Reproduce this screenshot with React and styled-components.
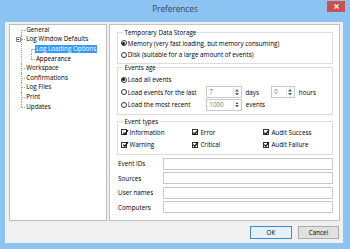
import React from "react";
import styled, { createGlobalStyle } from "styled-components";

const GlobalStyle = createGlobalStyle`
  html, body {
    margin: 0;
    padding: 0;
  }
  body {
    width: 350px;
    height: 249px;
    overflow: hidden;
    font-family: "Open Sans", "Noto Sans", sans-serif;
    color: #000;
  }
  * {
    box-sizing: border-box;
  }
`;

const Window = styled.div`
  width: 350px;
  height: 249px;
  background: #8cc3f2;
  display: flex;
  flex-direction: column;
`;

const TitleBar = styled.div`
  height: 22px;
  flex: none;
  display: grid;
  grid-template-columns: 1fr auto 1fr;
  align-items: start;
  padding: 0 5px;
`;

const Title = styled.div`
  grid-column: 2;
  font-size: 8.2px;
  line-height: 18px;
  color: #34465a;
`;

const CloseButton = styled.div`
  grid-column: 3;
  justify-self: end;
  width: 18px;
  height: 11px;
  margin-top: 1px;
  background: #c9514f;
  display: flex;
  align-items: center;
  justify-content: center;
`;

const Content = styled.div`
  flex: 1;
  margin: 0 7px 6px 5px;
  background: #f0f0f0;
  padding: 2px 3px 3.7px 4px;
  display: flex;
  flex-direction: column;
`;

const Main = styled.div`
  height: 197px;
  display: flex;
  gap: 2px;
`;

const TreePanel = styled.div`
  width: 98px;
  background: #fff;
  border: 1px solid #bdbdbd;
`;

const TreeList = styled.ul`
  list-style: none;
  margin: 0;
  padding: 0 0 0 ${(p) => p.$indent}px;
  font-size: 6.3px;
`;

const Item = styled.li`
  position: relative;
  padding-left: 4px;

  &::before {
    content: "";
    position: absolute;
    left: 0;
    top: ${(p) => (p.$first ? "4.8px" : "0")};
    height: ${(p) => (p.$last ? "4.8px" : "auto")};
    bottom: ${(p) => (p.$last ? "auto" : "0")};
    border-left: 1px dotted #a3a3a3;
  }

  &::after {
    content: "";
    position: absolute;
    left: 0;
    top: 4.8px;
    width: 4px;
    border-top: 1px dotted #a3a3a3;
  }
`;

const Row = styled.div`
  height: 9.6px;
  display: flex;
  align-items: center;
`;

const Label = styled.span`
  line-height: 8px;
  padding: 0 1.2px;
  white-space: nowrap;
  background: ${(p) => (p.$selected ? "#3399ff" : "transparent")};
  color: ${(p) => (p.$selected ? "#fff" : "#000")};
`;

const Expander = styled.span`
  position: absolute;
  left: -5.3px;
  top: 2.3px;
  width: 5px;
  height: 5px;
  border: 1px solid #8e8e8e;
  background: #fff;
  z-index: 1;

  &::after {
    content: "";
    position: absolute;
    left: 0.5px;
    right: 0.5px;
    top: 1.5px;
    border-top: 1px solid #444;
  }
`;

const RightPanel = styled.div`
  flex: 1;
  background: #fff;
  border: 1px solid #c3c3c3;
  padding: 0 6.5px;
  display: flex;
  flex-direction: column;
  font-size: 6.3px;
`;

const Group = styled.fieldset`
  margin: ${(p) => p.$mt}px 0 0;
  min-width: 0;
  border: 1px solid #dcdcdc;
  padding: ${(p) => p.$pt}px 3px ${(p) => p.$pb}px 3.3px;
`;

const Legend = styled.legend`
  line-height: 7px;
  padding: 0 1px;
  margin-left: 2.7px;
`;

const OptionRow = styled.div`
  height: ${(p) => p.$h}px;
  display: flex;
  align-items: center;
`;

const Option = styled.label`
  display: flex;
  align-items: center;
  width: ${(p) => (p.$w ? `${p.$w}px` : "auto")};
  white-space: nowrap;
  gap: ${(p) => p.$gap || 1}px;
`;

const Radio = styled.span`
  width: 6px;
  height: 6px;
  flex: none;
  border-radius: 50%;
  border: 1px solid #333;
  background: #fff;
  display: flex;
  align-items: center;
  justify-content: center;

  &::after {
    content: "";
    width: 3px;
    height: 3px;
    border-radius: 50%;
    background: ${(p) => (p.$checked ? "#111" : "transparent")};
  }
`;

const Check = styled.span`
  width: 6px;
  height: 6px;
  flex: none;
  border: 1px solid #333;
  background: #fff;
  position: relative;
`;

const CheckMark = styled.svg`
  position: absolute;
  left: -0.5px;
  top: -1.5px;
`;

const Spin = styled.div`
  width: ${(p) => p.$w}px;
  height: 12px;
  flex: none;
  border: 1px solid #c9c9c9;
  background: #fff;
  display: grid;
  grid-template-columns: 1fr 8px;
  color: #7a7a7a;
`;

const SpinValue = styled.span`
  padding-left: 2.5px;
  line-height: 10px;
`;

const SpinArrows = styled.span`
  border-left: 1px solid #e2e2e2;
  display: flex;
  flex-direction: column;
  align-items: center;
  justify-content: space-around;
  padding: 1.5px 0;
`;

const Unit = styled.span`
  width: ${(p) => (p.$w ? `${p.$w}px` : "auto")};
  padding-left: ${(p) => p.$pl}px;
  flex: none;
`;

const CheckGrid = styled.div`
  display: grid;
  grid-template-columns: 70.8px 71px auto;
  grid-auto-rows: 12.6px;
  align-items: center;
  padding-left: 0.4px;
`;

const Fields = styled.div`
  margin-top: 3px;
  display: flex;
  flex-direction: column;
  gap: 2.8px;
`;

const FieldRow = styled.div`
  display: grid;
  grid-template-columns: 46.6px 1fr;
  align-items: center;
  height: 11.7px;
`;

const FieldLabel = styled.span`
  padding-left: 1.6px;
`;

const TextBox = styled.div`
  height: 11.7px;
  border: 1px solid #c8c8c8;
  background: #fff;
`;

const ButtonRow = styled.div`
  margin-top: 5px;
  padding-right: 0.7px;
  display: flex;
  justify-content: flex-end;
  gap: 6px;
`;

const Button = styled.div`
  width: 41.6px;
  height: 13.3px;
  border: 1px solid ${(p) => (p.$default ? "#3d8ad0" : "#adadad")};
  background: ${(p) => (p.$default ? "#e5f1fb" : "#e1e1e1")};
  font-size: 6.3px;
  display: flex;
  align-items: center;
  justify-content: center;
`;

const Arrow = ({ up }) => (
  <svg width="4" height="2.5" viewBox="0 0 4 2.5">
    <path d={up ? "M0 2.5 L2 0 L4 2.5 Z" : "M0 0 L2 2.5 L4 0 Z"} fill="#5a5a5a" />
  </svg>
);

const SpinBox = ({ value, width }) => (
  <Spin $w={width}>
    <SpinValue>{value}</SpinValue>
    <SpinArrows>
      <Arrow up />
      <Arrow />
    </SpinArrows>
  </Spin>
);

const CheckOption = ({ children }) => (
  <Option $gap={2.4}>
    <Check>
      <CheckMark width="7" height="7" viewBox="0 0 7 7">
        <path d="M1.3 3.6 L2.8 5.2 L6 1.2" fill="none" stroke="#111" strokeWidth="1.3" />
      </CheckMark>
    </Check>
    {children}
  </Option>
);

const TreeItem = ({ label, first, last, selected, children }) => (
  <Item $first={first} $last={last}>
    <Row>
      {children && <Expander />}
      <Label $selected={selected}>{label}</Label>
    </Row>
    {children}
  </Item>
);

export default function App() {
  return (
    <>
      <GlobalStyle />
      <Window>
        <TitleBar>
          <Title>Preferences</Title>
          <CloseButton>
            <svg width="5" height="5" viewBox="0 0 5 5">
              <path d="M0.5 0.5 L4.5 4.5 M4.5 0.5 L0.5 4.5" stroke="#fff" strokeWidth="1.2" />
            </svg>
          </CloseButton>
        </TitleBar>
        <Content>
          <Main>
            <TreePanel>
              <TreeList $indent={11}>
                <TreeItem label="General" first />
                <TreeItem label="Log Window Defaults">
                  <TreeList $indent={5.7}>
                    <TreeItem label="Log Loading Options" first selected />
                    <TreeItem label="Appearance" last />
                  </TreeList>
                </TreeItem>
                <TreeItem label="Workspace" />
                <TreeItem label="Confirmations" />
                <TreeItem label="Log Files" />
                <TreeItem label="Print" />
                <TreeItem label="Updates" last />
              </TreeList>
            </TreePanel>
            <RightPanel>
              <Group $mt={3.8} $pt={1.6} $pb={2.5}>
                <Legend>Temporary Data Storage</Legend>
                <OptionRow $h={11.7}>
                  <Option>
                    <Radio $checked />
                    Memory (very fast loading, but memory consuming)
                  </Option>
                </OptionRow>
                <OptionRow $h={11.7}>
                  <Option>
                    <Radio />
                    Disk (suitable for a large amount of events)
                  </Option>
                </OptionRow>
              </Group>
              <Group $mt={0} $pt={2.2} $pb={3.5}>
                <Legend>Events age</Legend>
                <OptionRow $h={12.5}>
                  <Option>
                    <Radio $checked />
                    Load all events
                  </Option>
                </OptionRow>
                <OptionRow $h={12.5}>
                  <Option $w={85}>
                    <Radio />
                    Load events for the last
                  </Option>
                  <SpinBox value="7" width={36} />
                  <Unit $pl={3.7} $w={29}>
                    days
                  </Unit>
                  <SpinBox value="0" width={24} />
                  <Unit $pl={4}>hours</Unit>
                </OptionRow>
                <OptionRow $h={12.5}>
                  <Option $w={85}>
                    <Radio />
                    Load the most recent
                  </Option>
                  <SpinBox value="1000" width={36} />
                  <Unit $pl={4}>events</Unit>
                </OptionRow>
              </Group>
              <Group $mt={3} $pt={0.6} $pb={2.7}>
                <Legend>Event types</Legend>
                <CheckGrid>
                  <CheckOption>Information</CheckOption>
                  <CheckOption>Error</CheckOption>
                  <CheckOption>Audit Success</CheckOption>
                  <CheckOption>Warning</CheckOption>
                  <CheckOption>Critical</CheckOption>
                  <CheckOption>Audit Failure</CheckOption>
                </CheckGrid>
              </Group>
              <Fields>
                {["Event IDs", "Sources", "User names", "Computers"].map((f) => (
                  <FieldRow key={f}>
                    <FieldLabel>{f}</FieldLabel>
                    <TextBox />
                  </FieldRow>
                ))}
              </Fields>
            </RightPanel>
          </Main>
          <ButtonRow>
            <Button $default>OK</Button>
            <Button>Cancel</Button>
          </ButtonRow>
        </Content>
      </Window>
    </>
  );
}
